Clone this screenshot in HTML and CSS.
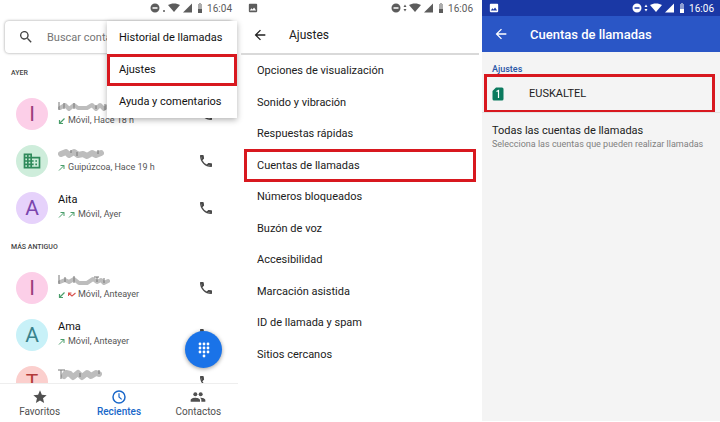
FILE: index.html
```html
<!DOCTYPE html>
<html lang="es">
<head>
    <meta charset="UTF-8">
    <meta name="viewport" content="width=device-width, initial-scale=1.0">
    <title>Cuentas de llamadas</title>
    <link rel="stylesheet" href="styles.css">
</head>
<body>

    <!-- Iconos compartidos -->
    <svg class="sprite" aria-hidden="true">
        <symbol id="image" viewBox="0 0 24 24"><path fill-rule="evenodd" d="M22 20V4a2 2 0 0 0-2-2H4a2 2 0 0 0-2 2v16a2 2 0 0 0 2 2h16a2 2 0 0 0 2-2zM8.500 12.500l2.500 3 3.500-4.500 5 7H4z"/></symbol>
        <symbol id="status" viewBox="0 0 54 12">
            <path fill-rule="evenodd" d="M5 1.500a4.500 4.500 0 1 0 0 9a4.500 4.500 0 0 0 0-9zM2.500 5.200h5v1.600h-5z"/>
            <path d="M18 3C21 .900 27 .900 30 3L24 10z"/>
            <path d="M42 1.500V10.500H33z"/>
            <path d="M48 2h1V1h2v1h1v5h-4z" opacity=".5"/><path d="M48 7h4v4h-4z"/>
        </symbol>
        <symbol id="updown" viewBox="0 0 4 12"><path d="M2 2.500L3.500 5h-3zM2 9.500L.500 7h3z"/></symbol>
        <symbol id="phone" viewBox="0 0 24 24"><path d="M6.540 5c.060.890.210 1.760.450 2.590l-1.200 1.200c-.410-1.200-.670-2.470-.760-3.790h1.510m9.860 12.020c.850.240 1.720.390 2.600.450v1.490c-1.320-.090-2.590-.350-3.800-.750l1.200-1.190M7.500 3H4c-.550 0-1 .450-1 1 0 9.390 7.610 17 17 17 .550 0 1-.450 1-1v-3.490c0-.550-.450-1-1-1-1.240 0-2.450-.200-3.570-.570a1.020 1.020 0 0 0-1.020.240l-2.200 2.200a15.050 15.050 0 0 1-6.590-6.590l2.200-2.200c.280-.280.360-.670.250-1.020A11.360 11.360 0 0 1 8.500 4c0-.550-.450-1-1-1z"/><path d="M4 4h4l.5 4-2 2zM20 20v-4l-4-.5-2 2z"/></symbol>
        <symbol id="back" viewBox="0 0 24 24"><path d="M20 11H7.830l5.590-5.590L12 4l-8 8 8 8 1.410-1.410L7.830 13H20z"/></symbol>
        <symbol id="out" viewBox="0 0 8 8"><path d="M1 6.500L6 1.500M2.500 1.500H6V5" fill="none" stroke="currentColor"/></symbol>
        <symbol id="in" viewBox="0 0 8 8"><path d="M6.500 1.500L1.500 6.500M1.500 3v3.500H5" fill="none" stroke="currentColor" stroke-width="1.200"/></symbol>
        <symbol id="missed" viewBox="0 0 8 8"><path d="M.500 5V2h3M.500 2l3.500 3L7.500 2" fill="none" stroke="currentColor" stroke-width="1.100"/></symbol>
    </svg>

    <main class="phones">

        <!-- Lista de llamadas -->
        <section class="phone">
            <div class="status">
                <svg class="status-icons" viewBox="0 0 54 12"><use href="#status"/><circle cx="14" cy="9" r="1"/></svg>
                <span>16:04</span>
            </div>
            <div class="search">
                <svg class="icon" viewBox="0 0 24 24"><path d="M15.500 14h-.790l-.280-.270A6.500 6.500 0 1 0 13.730 14.430l.270.280v.790l5 5L20.500 19zM9.500 14a4.500 4.500 0 1 1 0-9 4.500 4.500 0 0 1 0 9z"/></svg>
                <input type="search" placeholder="Buscar contactos" aria-label="Buscar contactos">
            </div>

            <div class="calls">
                <h2 class="day">AYER</h2>
                <ul>
                    <li class="call">
                        <span class="avatar pink">I</span>
                        <div class="info">
                            <svg class="hidden-name" viewBox="0 0 54 12"><path class="smudge" d="M2 8l5-3 4 4 5-4 4 3h9l5-3 4 4 4-4 4 4 5-4"/><path class="ink" d="M1 2v8M6 3v6M16 3v6M38 5v4M47 4v6M51 4v5"/></svg>
                            <p class="detail"><svg class="arrow"><use href="#in"/></svg>Móvil, Hace 18 h</p>
                        </div>
                        <button class="dial" aria-label="Llamar"><svg class="icon"><use href="#phone"/></svg></button>
                    </li>
                    <li class="call">
                        <span class="avatar green"><svg class="building" viewBox="0 0 24 24"><path fill-rule="evenodd" d="M12 7V3H2v18h20V7zM4 5h2v2H4zm4 0h2v2H8zM4 9h2v2H4zm4 0h2v2H8zM4 13h2v2H4zm4 0h2v2H8zM4 17h2v2H4zm4 0h2v2H8zM12 9h8v10h-8v-2h2v-2h-2v-2h2v-2h-2zM16 11h2v2h-2zm0 4h2v2h-2z"/></svg></span>
                        <div class="info">
                            <svg class="hidden-name" viewBox="0 0 54 12"><path class="smudge thick" d="M3 7l5-2 3 3 5-3 4 3 5-1 4 2 5-3 4 2 5-2"/><path class="ink" d="M13 3v3M19 5v4M40 3v4"/></svg>
                            <p class="detail"><svg class="arrow"><use href="#out"/></svg>Guipúzcoa, Hace 19 h</p>
                        </div>
                        <button class="dial" aria-label="Llamar"><svg class="icon"><use href="#phone"/></svg></button>
                    </li>
                    <li class="call">
                        <span class="avatar purple">A</span>
                        <div class="info">
                            <p class="name">Aita</p>
                            <p class="detail"><svg class="arrow"><use href="#out"/></svg><svg class="arrow"><use href="#out"/></svg>Móvil, Ayer</p>
                        </div>
                        <button class="dial" aria-label="Llamar"><svg class="icon"><use href="#phone"/></svg></button>
                    </li>
                </ul>
                <h2 class="day">MÁS ANTIGUO</h2>
                <ul>
                    <li class="call">
                        <span class="avatar pink">I</span>
                        <div class="info">
                            <svg class="hidden-name" viewBox="0 0 54 12"><path class="smudge" d="M2 8l5-2 4 2 5-3 5 4h8l6-4 4 3 4-2 3 3 4-2"/><path class="ink" d="M1 1v9M7 3v5M16 2v7M36 3h5M39 3v5M46 4v5"/></svg>
                            <p class="detail"><svg class="arrow"><use href="#in"/></svg><svg class="arrow red"><use href="#missed"/></svg>Móvil, Anteayer</p>
                        </div>
                        <button class="dial" aria-label="Llamar"><svg class="icon"><use href="#phone"/></svg></button>
                    </li>
                    <li class="call">
                        <span class="avatar cyan">A</span>
                        <div class="info">
                            <p class="name">Ama</p>
                            <p class="detail"><svg class="arrow"><use href="#out"/></svg>Móvil, Anteayer</p>
                        </div>
                        <button class="dial" aria-label="Llamar"><svg class="icon"><use href="#phone"/></svg></button>
                    </li>
                    <li class="call">
                        <span class="avatar rose">T</span>
                        <div class="info">
                            <svg class="hidden-name" viewBox="0 0 54 12"><path class="smudge thick" d="M6 8l2-3 4 1 3 3 5-4 4 4 5-4 4 3 5-3 3 1"/><path class="ink" d="M0 2h7M3 2v9M22 5v4M41 2v4"/></svg>
                            <p class="detail"></p>
                        </div>
                        <button class="dial" aria-label="Llamar"><svg class="icon"><use href="#phone"/></svg></button>
                    </li>
                </ul>
            </div>

            <nav class="tabs">
                <a href="#favoritos"><svg class="icon" viewBox="0 0 24 24"><path d="M12 17.270L18.180 21l-1.640-7.030L22 9.240l-7.190-.610L12 2 9.190 8.630 2 9.240l5.460 4.730L5.820 21z"/></svg>Favoritos</a>
                <a class="active" href="#recientes"><svg class="icon" viewBox="0 0 24 24"><circle cx="12" cy="12" r="9" fill="none" stroke="currentColor" stroke-width="2.200"/><path d="M12 6.500V12l4 3.500" fill="none" stroke="currentColor" stroke-width="1.800"/></svg>Recientes</a>
                <a href="#contactos"><svg class="icon" viewBox="0 0 24 24"><circle cx="8" cy="8" r="3"/><circle cx="16" cy="8" r="3"/><path d="M8 13c-2.330 0-7 1.170-7 3.500V19h14v-2.500C15 14.170 10.330 13 8 13zM16 13l-1 .050c1.160.840 2 1.970 2 3.450V19h6v-2.500c0-2.330-4.670-3.500-7-3.500z"/></svg>Contactos</a>
            </nav>

            <button class="fab" aria-label="Teclado">
                <svg class="icon" viewBox="0 0 16 16"><circle cx="4" cy="2" r="1.400"/><circle cx="8" cy="2" r="1.400"/><circle cx="12" cy="2" r="1.400"/><circle cx="4" cy="6" r="1.400"/><circle cx="8" cy="6" r="1.400"/><circle cx="12" cy="6" r="1.400"/><circle cx="4" cy="10" r="1.400"/><circle cx="8" cy="10" r="1.400"/><circle cx="12" cy="10" r="1.400"/><circle cx="8" cy="14" r="1.400"/></svg>
            </button>

            <div class="menu">
                <a href="#historial">Historial de llamadas</a>
                <a class="marked" href="#ajustes">Ajustes</a>
                <a href="#ayuda">Ayuda y comentarios</a>
            </div>
        </section>

        <!-- Ajustes -->
        <section class="phone">
            <div class="status">
                <svg class="picture"><use href="#image"/></svg>
                <svg class="status-icons" viewBox="0 0 54 12"><use href="#status"/><use href="#updown" x="12" width="4" height="12"/></svg>
                <span>16:06</span>
            </div>
            <header class="bar">
                <button aria-label="Atrás"><svg class="icon"><use href="#back"/></svg></button>
                <h1>Ajustes</h1>
            </header>
            <ul class="settings">
                <li><a href="#visualizacion">Opciones de visualización</a></li>
                <li><a href="#sonido">Sonido y vibración</a></li>
                <li><a href="#respuestas">Respuestas rápidas</a></li>
                <li><a class="marked" href="#cuentas">Cuentas de llamadas</a></li>
                <li><a href="#bloqueados">Números bloqueados</a></li>
                <li><a href="#buzon">Buzón de voz</a></li>
                <li><a href="#accesibilidad">Accesibilidad</a></li>
                <li><a href="#marcacion">Marcación asistida</a></li>
                <li><a href="#spam">ID de llamada y spam</a></li>
                <li><a href="#sitios">Sitios cercanos</a></li>
            </ul>
        </section>

        <!-- Cuentas de llamadas -->
        <section class="phone accounts">
            <div class="status">
                <svg class="picture"><use href="#image"/></svg>
                <svg class="status-icons" viewBox="0 0 54 12"><use href="#status"/><use href="#updown" x="12" width="4" height="12"/></svg>
                <span>16:06</span>
            </div>
            <header class="bar">
                <button aria-label="Atrás"><svg class="icon"><use href="#back"/></svg></button>
                <h1>Cuentas de llamadas</h1>
            </header>
            <h2 class="group">Ajustes</h2>
            <a class="account marked" href="#euskaltel">
                <svg class="sim" viewBox="0 0 12 14"><path d="M4 .500h6A1.500 1.500 0 0 1 11.500 2v10a1.500 1.500 0 0 1-1.500 1.500H2A1.500 1.500 0 0 1 .500 12V4z"/><path d="M4.500 4.500L6.500 3.500V11" fill="none" stroke="#fff" stroke-width="1.200"/></svg>
                EUSKALTEL
            </a>
            <a class="all" href="#todas">
                <strong>Todas las cuentas de llamadas</strong>
                <small>Selecciona las cuentas que pueden realizar llamadas</small>
            </a>
        </section>

    </main>

</body>
</html>
```

FILE: styles.css
```css
/* Estilo global */
* {
    box-sizing: border-box;
}

body {
    margin: 0;
    background-color: #fff;
    color: #212121;
    font-family: Roboto, sans-serif;
    font-size: 11px;
}

h1, h2, p, ul {
    margin: 0;
    padding: 0;
    font-weight: normal;
}

ul {
    list-style: none;
}

a {
    color: inherit;
    text-decoration: none;
}

button {
    display: flex;
    padding: 0;
    border: none;
    background: none;
    color: inherit;
    cursor: pointer;
}

svg {
    display: block;
    flex: none;
    fill: currentColor;
}

.sprite {
    position: absolute;
    width: 0;
    height: 0;
}

.icon {
    width: 16px;
    height: 16px;
}

/* Tres pantallas */
.phones {
    display: grid;
    grid-template-columns: repeat(3, 1fr);
    gap: 3px;
    height: 100vh;
    padding-bottom: 1px;
}

.phone {
    position: relative;
    display: flex;
    flex-direction: column;
    min-width: 0;
    min-height: 0;
}

/* Barra de estado */
.status {
    display: flex;
    align-items: center;
    height: 16px;
    padding: 0 6px 0 7px;
    color: #5c5c5c;
    font-size: 10px;
}

.picture {
    width: 10px;
    height: 10px;
}

.status-icons {
    width: 54px;
    height: 12px;
    margin-left: auto;
    margin-right: 3px;
}

.marked {
    outline: 3px solid #d8181f;
    outline-offset: -2px;
}

/* Buscador */
.search {
    display: flex;
    align-items: center;
    gap: 13px;
    height: 32px;
    margin: 5px 5px 4px;
    padding: 0 13px;
    border-radius: 4px;
    box-shadow: 0 0 3px rgba(0, 0, 0, 0.4);
    color: #444;
}

.search input {
    min-width: 0;
    flex: 1;
    border: none;
    outline: none;
    padding: 0;
    background: none;
    font: 11px Roboto, sans-serif;
}

.search input::placeholder {
    color: #757575;
}

/* Llamadas */
.calls {
    flex: 1;
    min-height: 0;
    overflow: hidden;
}

.day {
    padding-left: 11px;
    color: #444;
    font-size: 7px;
    font-weight: 500;
    line-height: 33px;
}

.call {
    display: flex;
    align-items: center;
    height: 47px;
    padding: 0 24px 0 16px;
}

.avatar {
    display: flex;
    align-items: center;
    justify-content: center;
    width: 32px;
    height: 32px;
    margin-right: 10px;
    border-radius: 50%;
    font-size: 21px;
}

.pink {
    background-color: #fccfe8;
    color: #9c3f7c;
}

.green {
    background-color: #ceeddb;
    color: #2f8a5b;
}

.purple {
    background-color: #e6d2fb;
    color: #7b46ad;
}

.cyan {
    background-color: #c8f1f8;
    color: #38828c;
}

.rose {
    background-color: #fbcfcd;
    color: #b23a38;
}

.building {
    width: 20px;
    height: 20px;
}

.info {
    flex: 1;
    min-width: 0;
    white-space: nowrap;
}

.name {
    font-size: 11px;
    line-height: 14px;
    color: #111;
}

.hidden-name {
    width: 54px;
    height: 14px;
    fill: none;
}

.ink {
    stroke: #777;
}

.smudge {
    stroke: #bdbdbd;
    stroke-width: 4;
    stroke-linejoin: round;
    stroke-linecap: round;
}

.thick {
    stroke-width: 6;
}

.detail {
    display: flex;
    align-items: center;
    gap: 2px;
    min-height: 15px;
    color: #555;
    font-size: 9px;
    line-height: 15px;
}

.arrow {
    width: 8px;
    height: 8px;
    color: #4a9e6b;
}

.red {
    color: #d9534f;
}

.dial {
    color: #4a4a4a;
}

/* Navegación inferior */
.tabs {
    display: grid;
    grid-template-columns: repeat(3, 1fr);
    height: 38px;
    border-top: 1px solid #eee;
    color: #505050;
}

.tabs a {
    display: flex;
    flex-direction: column;
    align-items: center;
    padding-top: 5px;
    font-size: 10px;
    line-height: 13px;
}

.tabs .active {
    color: #1967c9;
    font-weight: 500;
}

.fab {
    position: absolute;
    right: 16px;
    bottom: 53px;
    align-items: center;
    justify-content: center;
    width: 37px;
    height: 37px;
    border-radius: 50%;
    background-color: #1a73e8;
    color: #fff;
    box-shadow: 0 1px 4px rgba(0, 0, 0, 0.4);
}

/* Menú desplegable */
.menu {
    position: absolute;
    top: 21px;
    right: 1px;
    width: 130px;
    padding-top: 1px;
    background-color: #fff;
    color: #111;
    box-shadow: 0 2px 6px rgba(0, 0, 0, 0.3);
}

.menu a {
    display: block;
    padding-left: 12px;
    line-height: 32px;
}

.menu .marked {
    outline-offset: -3px;
}

/* Cabecera */
.bar {
    display: flex;
    align-items: center;
    gap: 21px;
    height: 39px;
    padding-left: 11px;
    border-bottom: 2px solid #d9d9d9;
}

.bar h1 {
    font-size: 12px;
}

.settings {
    display: grid;
    grid-auto-rows: 1fr;
    flex: 1;
    margin-bottom: 51px;
}

.settings a {
    display: flex;
    align-items: center;
    height: 100%;
    margin: 0 4px;
    padding-left: 12px;
}

/* Pantalla de cuentas */
.accounts {
    background-color: #f4f4f4;
}

.accounts .status {
    background-color: #1a38a5;
    color: #fff;
}

.accounts .bar {
    height: 36px;
    border: none;
    background-color: #2a56c6;
    color: #fff;
}

.accounts .bar h1 {
    font-size: 13px;
    font-weight: 500;
}

.group {
    padding: 12px 10px 0;
    color: #2a56a6;
    font-size: 9px;
    font-weight: 500;
    line-height: 11px;
}

.account {
    display: flex;
    align-items: center;
    gap: 25px;
    height: 37px;
    margin: 0 6px 0 3px;
    padding-left: 7px;
}

.sim {
    width: 12px;
    height: 14px;
    color: #0b7a5e;
}

.all {
    padding: 11px 10px;
    border-top: 1px solid #e4e4e4;
    white-space: nowrap;
}

.all strong,
.all small {
    display: block;
    font-weight: normal;
}

.all strong {
    font-size: 11px;
    line-height: 14px;
}

.all small {
    color: #808080;
    font-size: 9px;
    line-height: 13px;
}
```
